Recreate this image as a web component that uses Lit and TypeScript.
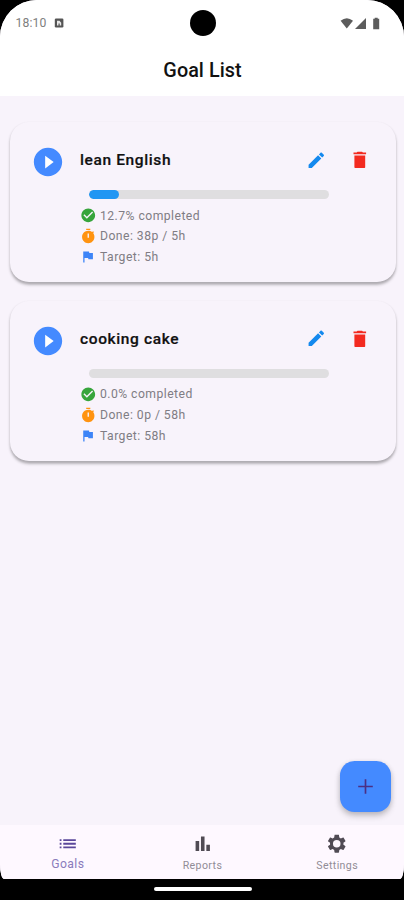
import { LitElement, html, css, svg } from "lit";
import { customElement, property } from "lit/decorators.js";

const icons: Record<string, string> = {
  play: "M12 2C6.48 2 2 6.48 2 12s4.48 10 10 10 10-4.48 10-10S17.52 2 12 2zm-2 14.5v-9l6 4.5-6 4.5z",
  edit: "M3 17.25V21h3.75L17.81 9.94l-3.75-3.75L3 17.25zM20.71 7.04c.39-.39.39-1.02 0-1.41l-2.34-2.34c-.39-.39-1.02-.39-1.41 0l-1.83 1.83 3.75 3.75 1.83-1.83z",
  trash: "M6 7.2h12V20.2q0 .8-.8.8H6.8q-.8 0-.8-.8zM19 3.8H15.5l-1-.8h-5l-1 .8H5v1.9h14V3.8z",
  check: "M12 2C6.48 2 2 6.48 2 12s4.48 10 10 10 10-4.48 10-10S17.52 2 12 2zm-2 15l-5-5 1.41-1.41L10 14.17l7.59-7.59L19 8l-9 9z",
  timer: "M15 1H9v2h6V1zm4.03 6.39 1.42-1.42c-.43-.51-.9-.99-1.41-1.41l-1.42 1.42C16.07 4.74 14.12 4 12 4c-4.97 0-9 4.03-9 9s4.02 9 9 9 9-4.03 9-9c0-2.12-.74-4.07-1.97-5.61zM13 14h-2V8h2v6z",
  flag: "M14.4 6L14 4H5v17h2v-7h5.6l.4 2h7V6z",
  list: "M3 13h2v-2H3v2zm0 4h2v-2H3v2zm0-8h2V7H3v2zm4 4h14v-2H7v2zm0 4h14v-2H7v2zM7 7v2h14V7H7z",
  bars: "M4 9h4v11H4zM16 13h4v7h-4zM10 4h4v16h-4z",
  gear: "M19.43 12.98c.04-.32.07-.64.07-.98s-.03-.66-.07-.98l2.11-1.65c.19-.15.24-.42.12-.64l-2-3.46c-.09-.16-.26-.25-.44-.25-.06 0-.12.01-.17.03l-2.49 1c-.52-.4-1.08-.73-1.69-.98l-.38-2.65C14.46 2.18 14.25 2 14 2h-4c-.25 0-.46.18-.49.42l-.38 2.65c-.61.25-1.17.59-1.69.98l-2.49-1c-.06-.02-.12-.03-.18-.03-.17 0-.34.09-.43.25l-2 3.46c-.13.22-.07.49.12.64l2.11 1.65c-.04.32-.07.65-.07.98s.03.66.07.98l-2.11 1.65c-.19.15-.24.42-.12.64l2 3.46c.09.16.26.25.44.25.06 0 .12-.01.17-.03l2.49-1c.52.4 1.08.73 1.69.98l.38 2.65c.03.24.24.42.49.42h4c.25 0 .46-.18.49-.42l.38-2.65c.61-.25 1.17-.59 1.69-.98l2.49 1c.06.02.12.03.18.03.17 0 .34-.09.43-.25l2-3.46c.12-.22.07-.49-.12-.64l-2.11-1.65zM12 16.2a4.2 4.2 0 1 1 0-8.4 4.2 4.2 0 0 1 0 8.4z",
  plus: "M19 12.8h-6.2V19h-1.6v-6.2H5v-1.6h6.2V5h1.6v6.2H19z",
};

const icon = (name: string) =>
  html`<svg class="icon ${name}" viewBox="0 0 24 24">${svg`<path d=${icons[name]} />`}</svg>`;

@customElement("goal-card")
export class GoalCard extends LitElement {
  @property() name = "";
  @property({ type: Number }) percent = 0;
  @property() done = "";
  @property() target = "";

  static styles = css`
    :host {
      display: grid;
      grid-template-columns: 70.5px 1fr;
      box-sizing: border-box;
      height: 160px;
      border-radius: 19px;
      background: #f8f3fb;
      box-shadow: 0 2.5px 3px rgba(0, 0, 0, 0.24), 0 1.5px 2px rgba(0, 0, 0, 0.08);
    }
    .icon { display: block; fill: currentColor; flex: none; }
    .play { width: 34px; height: 34px; margin: 23px 0 0 21.5px; color: #448aff; background: radial-gradient(#fff 8px, transparent 8.5px); }
    .head { display: flex; align-items: center; height: 24px; padding-top: 26px; }
    .name { flex: 1; font-weight: 500; font-size: 15.5px; letter-spacing: 0.62px; color: #111; -webkit-text-stroke: 0.2px #111; }
    .edit { width: 20.6px; height: 20.6px; color: #1489ee; margin-right: 22.4px; }
    .trash { width: 21.6px; height: 21.6px; color: #f32a20; margin-right: 25.5px; }
    .track { width: 240px; height: 9px; margin: 18px 0 0 9px; border-radius: 5px; background: #dfdee0; overflow: hidden; }
    .fill { height: 100%; border-radius: 5px; background: #2196f3; }
    .rows { margin-top: 6.2px; }
    .row { display: flex; align-items: center; gap: 4px; height: 20.8px; margin-left: -0.5px; font-size: 12.2px; letter-spacing: 0.45px; color: #807d84; }
    .row .icon { width: 16.5px; height: 16.5px; }
    .check { color: #37a53c; }
    .timer { color: #ff9310; }
    .row .flag { width: 15.5px; height: 15.5px; margin: 0 0.5px; color: #3d84f7; }
  `;

  render() {
    return html`
      ${icon("play")}
      <div>
        <div class="head"><span class="name">${this.name}</span>${icon("edit")}${icon("trash")}</div>
        <div class="track"><div class="fill" style="width:${this.percent}%"></div></div>
        <div class="rows">
          <div class="row">${icon("check")}<span>${this.percent.toFixed(1)}% completed</span></div>
          <div class="row">${icon("timer")}<span>Done: ${this.done}</span></div>
          <div class="row">${icon("flag")}<span>Target: ${this.target}</span></div>
        </div>
      </div>
    `;
  }
}

@customElement("app-root")
export class AppRoot extends LitElement {
  static styles = css`
    :host {
      display: block;
      width: 404px;
      height: 900px;
      overflow: hidden;
      background: #000;
      font-family: Roboto, sans-serif;
    }
    .screen {
      position: relative;
      display: flex;
      flex-direction: column;
      height: 879px;
      overflow: hidden;
      border-radius: 37px 37px 4px 4px / 37px 37px 15px 15px;
      background: #f8f3fb;
    }
    .icon { display: block; fill: currentColor; }
    header { height: 96px; background: #fff; }
    .status { display: flex; align-items: center; height: 46px; padding: 0 23px 0 15.5px; color: #5c5c5c; }
    .time { width: 38px; font-size: 12.2px; letter-spacing: 0.1px; color: #808080; }
    .app { width: 10px; height: 10px; }
    .camera { width: 26px; height: 26px; border-radius: 50%; background: #000; margin-left: 126px; }
    .signals { width: 41px; height: 13px; margin-left: auto; }
    h1 { margin: 0; height: 50px; line-height: 50.5px; text-align: center; font-weight: 500; font-size: 19.8px; letter-spacing: 0.05px; color: #111; padding-left: 1px; }
    main { flex: 1; display: flex; flex-direction: column; gap: 18.7px; padding: 26px 8px 0 9.5px; }
    .fab {
      position: absolute;
      right: 13.5px;
      bottom: 67.5px;
      display: grid;
      place-items: center;
      width: 50.5px;
      height: 50.5px;
      border-radius: 14.5px;
      background: #448aff;
      color: #4b2f83;
      box-shadow: 0 4px 6px rgba(0, 0, 0, 0.2), 0 1px 5px rgba(0, 0, 0, 0.1);
    }
    .plus { width: 25px; height: 25px; }
    nav { display: grid; grid-template-columns: repeat(3, 1fr); height: 54px; background: #fef8ff; color: #504b54; }
    .tab { display: flex; flex-direction: column; align-items: center; font-size: 10.6px; letter-spacing: 0.38px; padding: 8px 0 0 1px; }
    .tab .icon { width: 21.5px; height: 21.5px; }
    .tab span { line-height: 14px; margin-top: 4px; color: #918c96; }
    .tab.active { color: #5a479a; font-size: 12.2px; }
    .tab.active span { color: #8a7cbc; margin-top: 2px; }
    .handle { width: 98px; height: 4px; margin: 8px 0 0 153.5px; border-radius: 2px; background: #fff; }
  `;

  render() {
    return html`
      <div class="screen">
        <header>
          <div class="status">
            <span class="time">18:10</span>
            <svg class="app" viewBox="0 0 10 10">
              <rect x="0.8" y="0.5" width="8.6" height="9" rx="1.2" fill="#555" />
              <path d="M3 7.5V2.8h2.5l1.7 2v2.7H5.7V5.6H4.5v1.9z" fill="#e8e8e8" />
            </svg>
            <div class="camera"></div>
            <svg class="signals" viewBox="0 0 41 13" fill="#5c5c5c">
              <path d="M0.6 3.8Q6.8-1.2 13 3.8L6.8 11.5z" />
              <path d="M26 1v11H15z" />
              <path d="M33.2 1.8h1.5V0.7h3v1.1h1.5v10.4h-6z" />
            </svg>
          </div>
          <h1>Goal List</h1>
        </header>
        <main>
          <goal-card name="lean English" .percent=${12.7} done="38p / 5h" target="5h"></goal-card>
          <goal-card name="cooking cake" .percent=${0} done="0p / 58h" target="58h"></goal-card>
        </main>
        <nav>
          <div class="tab active">${icon("list")}<span>Goals</span></div>
          <div class="tab">${icon("bars")}<span>Reports</span></div>
          <div class="tab">${icon("gear")}<span>Settings</span></div>
        </nav>
        <div class="fab">${icon("plus")}</div>
      </div>
      <div class="handle"></div>
    `;
  }
}
